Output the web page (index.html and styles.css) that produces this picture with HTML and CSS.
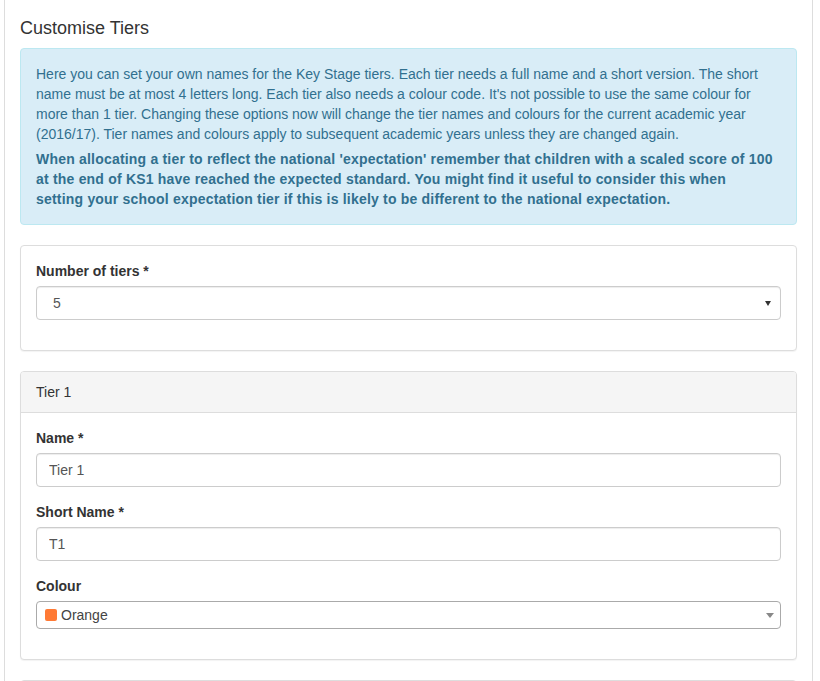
FILE: index.html
```html
<!DOCTYPE html>
<html lang="en">
<head>
<meta charset="utf-8">
<title>Customise Tiers</title>
<link rel="stylesheet" href="styles.css">
</head>
<body>
<div class="page">
  <h4 class="title">Customise Tiers</h4>
  <div class="alert">
    <p>Here you can set your own names for the Key Stage tiers. Each tier needs a full name and a short version. The short name must be at most 4 letters long. Each tier also needs a colour code. It's not possible to use the same colour for more than 1 tier. Changing these options now will change the tier names and colours for the current academic year (2016/17). Tier names and colours apply to subsequent academic years unless they are changed again.</p>
    <p class="strong">When allocating a tier to reflect the national 'expectation' remember that children with a scaled score of 100<br> at the end of KS1 have reached the expected standard. You might find it useful to consider this when<br> setting your school expectation tier if this is likely to be different to the national expectation.</p>
  </div>

  <div class="panel">
    <div class="panel-body">
      <div class="form-group">
        <label class="label" for="num">Number of tiers *</label>
        <div class="select-wrap">
          <select id="num" class="select">
            <option>5</option>
          </select>
        </div>
      </div>
    </div>
  </div>

  <div class="panel">
    <div class="panel-heading">Tier 1</div>
    <div class="panel-body">
      <div class="form-group">
        <label class="label" for="name1">Name *</label>
        <input id="name1" class="input" type="text" value="Tier 1">
      </div>
      <div class="form-group">
        <label class="label" for="short1">Short Name *</label>
        <input id="short1" class="input" type="text" value="T1">
      </div>
      <div class="form-group">
        <label class="label">Colour</label>
        <div class="select2">
          <span class="swatch"></span>
          <span class="select2-text">Orange</span>
          <span class="select2-arrow"></span>
        </div>
      </div>
    </div>
  </div>

  <div class="panel">
    <div class="panel-heading">Tier 2</div>
    <div class="panel-body">
      <div class="form-group">
        <label class="label">Name *</label>
        <input class="input" type="text" value="Tier 2">
      </div>
    </div>
  </div>
</div>
</body>
</html>
```

FILE: styles.css
```css
html, body {
  margin: 0;
  padding: 0;
  height: 681px;
  overflow: hidden;
  background: #fff;
}

body {
  font-family: "Liberation Sans", Arial, Helvetica, sans-serif;
  font-size: 14px;
  line-height: 20px;
  color: #333;
}

.page {
  box-sizing: border-box;
  width: 809px;
  margin: 0 0 0 4px;
  min-height: 681px;
  padding: 9px 15px 0;
  border-left: 1px solid #ddd;
  border-right: 1px solid #ddd;
  background: #fff;
}

.title {
  margin: 10px 0 9px;
  font-size: 18px;
  font-weight: 500;
  line-height: 1.1;
  color: #333;
}

.alert {
  padding: 15px;
  margin-bottom: 20px;
  border: 1px solid #bce8f1;
  border-radius: 4px;
  background: #d9edf7;
  color: #31708f;
}

.alert p {
  margin: 0;
}

.alert p + p {
  margin-top: 5px;
}

.alert .strong {
  font-weight: bold;
  letter-spacing: 0.2px;
  white-space: nowrap;
}

.panel {
  margin-bottom: 20px;
  border: 1px solid #ddd;
  border-radius: 4px;
  background: #fff;
  box-shadow: 0 1px 1px rgba(0, 0, 0, 0.05);
}

.panel-heading {
  padding: 10px 15px;
  background: #f5f5f5;
  border-bottom: 1px solid #ddd;
  border-radius: 3px 3px 0 0;
  color: #333;
}

.panel-body {
  padding: 15px;
}

.form-group {
  margin-bottom: 15px;
}

.label {
  display: block;
  margin-bottom: 5px;
  font-weight: bold;
  color: #333;
}

.input,
.select {
  box-sizing: border-box;
  display: block;
  width: 100%;
  height: 34px;
  margin: 0;
  padding: 6px 12px;
  font-family: inherit;
  font-size: 14px;
  line-height: 20px;
  color: #555;
  background: #fff;
  border: 1px solid #ccc;
  border-radius: 4px;
  box-shadow: inset 0 1px 1px rgba(0, 0, 0, 0.075);
  outline: none;
}

.select-wrap {
  position: relative;
}

.select {
  -webkit-appearance: none;
  appearance: none;
  padding-left: 16px;
}

.select-wrap::after {
  content: "";
  position: absolute;
  right: 10px;
  top: 15px;
  width: 0;
  height: 0;
  border-style: solid;
  border-width: 5px 3px 0 3px;
  border-color: #333 transparent transparent transparent;
  pointer-events: none;
}

.select2 {
  position: relative;
  box-sizing: border-box;
  display: flex;
  align-items: center;
  height: 28px;
  padding-left: 8px;
  border: 1px solid #aaa;
  border-radius: 4px;
  background: #fff;
  color: #444;
}

.swatch {
  display: inline-block;
  width: 12px;
  height: 12px;
  margin-right: 4px;
  border-radius: 2px;
  background: #ff7a35;
}

.select2-text {
  line-height: 26px;
}

.select2-arrow {
  position: absolute;
  right: 6px;
  top: 11px;
  width: 0;
  height: 0;
  border-style: solid;
  border-width: 5px 4px 0 4px;
  border-color: #888 transparent transparent transparent;
}
```
